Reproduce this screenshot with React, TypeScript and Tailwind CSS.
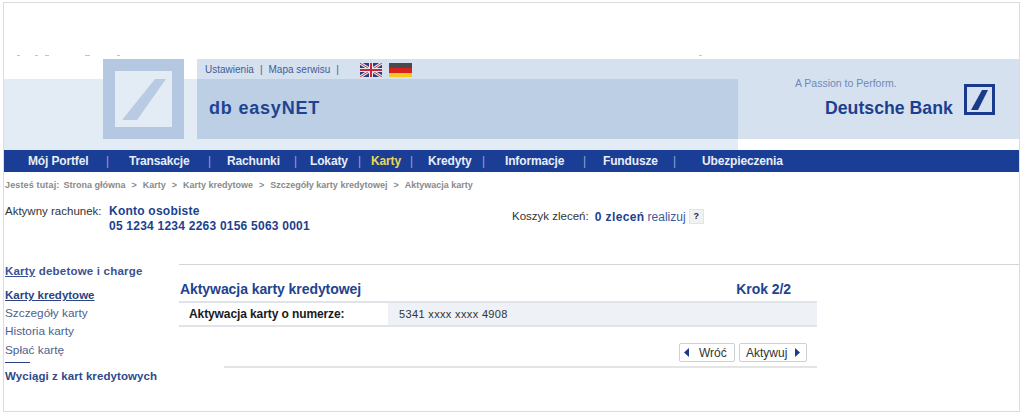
const navItems = [
  { label: "Mój Portfel", cell: "w-[101px] pr-[20px]" },
  { label: "Transakcje", cell: "w-[98px] pr-[16px]" },
  { label: "Rachunki", cell: "w-[83px] pr-[13px]" },
  { label: "Lokaty", cell: "w-[61px] pr-[10px]" },
  { label: "Karty", cell: "w-[57px] pr-[15px]", active: true },
  { label: "Kredyty", cell: "w-[77px] pr-[20px]" },
  { label: "Informacje", cell: "w-[98px] pr-[17px]" },
  { label: "Fundusze", cell: "w-[99px] pr-[26px]" },
  { label: "Ubezpieczenia", cell: "w-[100px]", last: true },
]

const crumbs = ["Strona główna", "Karty", "Karty kredytowe", "Szczegóły karty kredytowej"]

const UkFlag = () => (
  <svg width="22" height="14" viewBox="0 0 22 14">
    <rect width="22" height="14" fill="#2a3f7e" />
    <path d="M0 0L22 14M22 0L0 14" stroke="#e8e8ee" strokeWidth="3" />
    <path d="M0 0L22 14M22 0L0 14" stroke="#c4394a" strokeWidth="1" />
    <path d="M11 0V14M0 7H22" stroke="#e8e8ee" strokeWidth="4" />
    <path d="M11 0V14M0 7H22" stroke="#c4283a" strokeWidth="2" />
  </svg>
)

const DeFlag = () => (
  <div className="w-[23px] h-[14px] flex flex-col">
    <div className="h-[5px] bg-[#4a4a4a]" />
    <div className="h-[5px] bg-[#d8201c]" />
    <div className="h-[4px] bg-[#f6c81e]" />
  </div>
)

const Triangle = ({ dir }: { dir: "left" | "right" }) => (
  <svg width="5" height="9" viewBox="0 0 5 9">
    <path d={dir === "left" ? "M5 0V9L0 4.5Z" : "M0 0V9L5 4.5Z"} fill="#1a3a8a" />
  </svg>
)

const App = () => {
  return (
    <div className="w-[1024px] h-[416px] bg-white font-['Liberation_Sans',Arial,sans-serif] pl-[3px] pt-[2px] overflow-hidden">
      <div className="w-[1017px] h-[410px] border border-[#dcdcdc] flex flex-col">
        {/* clipped remains of the page top */}
        <div className="h-[53px] flex items-end text-[0px]">
          <div className="w-[3px] h-[1px] ml-[13px] bg-[#c4c4c4]" />
          <div className="w-[3px] h-[1px] ml-[15px] bg-[#c4c4c4]" />
          <div className="w-[4px] h-[1px] ml-[7px] bg-[#c4c4c4]" />
          <div className="w-[5px] h-[1px] ml-[36px] bg-[#c4c4c4]" />
          <div className="w-[3px] h-[1px] ml-[27px] bg-[#c4c4c4]" />
          <div className="w-[3px] h-[1px] ml-[579px] bg-[#c8c8c8]" />
        </div>
        <div className="mt-[3px] h-[91px] grid grid-cols-[99px_81px_13px_541px_1fr] grid-rows-[20px_60px_11px]">
          <div className="col-start-1 col-end-5 row-start-2 row-end-4 bg-[#e3ebf5]" />
          <div className="col-start-2 row-start-1 row-end-3 bg-[#b4c8e1] p-[12px] z-10">
            <div className="w-[57px] h-[56px] bg-[#e3ebf5] flex items-center justify-center">
              <svg width="44" height="41" viewBox="0 0 44 41">
                <path d="M33 0H44L15 41H0Z" fill="#b9cbe3" />
              </svg>
            </div>
          </div>
          <div className="col-start-4 col-end-6 row-start-1 row-end-3 bg-[#d6e1ef] z-10" />
          <div className="col-start-4 row-start-2 bg-[#bccfe5] z-10 pl-[12px] pb-[2px] flex items-center text-[#1d4491] text-[18px] leading-none font-bold tracking-[0.8px]">
            db easyNET
          </div>
          <div className="col-start-4 row-start-1 z-20 pl-[8px] flex items-center text-[10px] text-[#3e5c99]">
            <span>Ustawienia</span>
            <span className="ml-[6px]">|</span>
            <span className="ml-[6px]">Mapa serwisu</span>
            <span className="ml-[6px]">|</span>
            <span className="ml-[21px] mt-[2px] flex"><UkFlag /></span>
            <span className="ml-[7px] mt-[2px] flex"><DeFlag /></span>
          </div>
          <div className="col-start-5 row-start-1 row-end-3 z-20 pl-[57px] pt-[18px] flex flex-col">
            <div className="text-[10.5px] leading-[12px] text-[#6f88b8]">A Passion to Perform.</div>
            <div className="flex items-start -mt-[5px] ml-[30px]">
              <div className="mt-[15px] text-[17.7px] leading-[18px] font-bold text-[#1d3f8f] whitespace-nowrap">Deutsche Bank</div>
              <div className="ml-[11px] w-[31px] h-[31px] border-[3px] border-[#1a3a8c] bg-[#d6e1ef] flex items-center justify-center">
                <svg width="17" height="20" viewBox="0 0 17 20">
                  <path d="M11 0H17L7 20H0Z" fill="#1a3a8c" />
                </svg>
              </div>
            </div>
          </div>
        </div>

        <div className="h-[22px] bg-[#1a3e96] flex items-center pl-[24px] text-[12px] font-bold text-[#e8edf6] tracking-[-0.15px]">
          {navItems.map((item) => (
            <div key={item.label} className={`${item.cell} flex justify-between whitespace-nowrap`}>
              <span className={item.active ? "text-[#e8d94e]" : ""}>{item.label}</span>
              {!item.last && <span className="font-normal text-[#8fa6d4]">|</span>}
            </div>
          ))}
        </div>

        <div className="h-[26px] flex items-center pl-[1px] pt-[1px] text-[9px] font-bold text-[#8a8a8a] whitespace-nowrap">
          <span className="tracking-[0.15px]">Jesteś tutaj:</span>
          <span className="ml-[4px]" />
          {crumbs.map((c) => (
            <span key={c} className="mr-[6px]">{c}<span className="ml-[6px]">&gt;</span></span>
          ))}
          <span>Aktywacja karty</span>
        </div>

        <div className="h-[53px] flex text-[12px] pt-[6px]">
          <div className="w-[105px] pl-[1px] text-[11.5px] text-[#333] leading-[14px]">Aktywny rachunek:</div>
          <div className="w-[403px] text-[#1d3f8f] font-bold leading-[15px] tracking-[0.23px]">
            <div>Konto osobiste</div>
            <div>05 1234 1234 2263 0156 5063 0001</div>
          </div>
          <div className="flex items-start text-[11.5px] pt-[4px]">
            <span className="text-[#333]">Koszyk zleceń:</span>
            <span className="ml-[6px] font-bold text-[12px] text-[#1d3f8f] tracking-[0.4px]">0 zleceń</span>
            <span className="ml-[3px] text-[12px] text-[#3a5a9a]">realizuj</span>
            <span className="ml-[3px] mt-[1px] w-[15px] h-[15px] bg-[#f1f1f1] border border-[#e4e4e4] flex items-center justify-center text-[9px] font-bold text-[#222]">?</span>
          </div>
        </div>

        <div className="flex flex-1">
          <div className="w-[175px] pt-[13px] pl-[1px] text-[#2f4a8c] text-[11.5px]">
            <div className="font-bold tracking-[0.2px] leading-[15px] text-[#3a5293]"><span className="underline">Karty</span> debetowe i charge</div>
            <div className="mt-[9px] font-bold underline leading-[15px] text-[#2c4484]">Karty kredytowe</div>
            <div className="mt-[3px] leading-[15px] text-[11.8px] text-[#4d5f8f]">Szczegóły karty</div>
            <div className="mt-[3px] leading-[15px] text-[11.8px] text-[#4d5f8f]">Historia karty</div>
            <div className="mt-[4px] leading-[15px] text-[11.8px] text-[#4d5f8f]">Spłać kartę</div>
            <div className="mt-[4px] w-[25px] h-[1px] bg-[#2c4484]" />
            <div className="mt-[6px] font-bold leading-[15px] tracking-[0.08px] text-[#2f4a8c]">Wyciągi z kart kredytowych</div>
          </div>
          <div className="flex-1 pt-[13px] min-w-0">
            <div className="border-t border-[#d4d4d4]">
              <div className="w-[638px]">
                <div className="h-[36px] flex justify-between items-end pb-[4px] pl-[1px] pr-[26px] text-[14px] leading-[16px] font-bold text-[#1f4391] tracking-[-0.07px]">
                  <span>Aktywacja karty kredytowej</span>
                  <span>Krok 2/2</span>
                </div>
                <div className="h-[26px] flex border-y-2 border-[#e0e3e7] text-[12px] items-center">
                  <div className="w-[209px] pl-[10px] font-bold text-[#1a1a1a] tracking-[-0.1px]">Aktywacja karty o numerze:</div>
                  <div className="flex-1 h-full bg-[#eef1f5] pl-[11px] flex items-center text-[#333] text-[11px] tracking-[0.35px]">5341 xxxx xxxx 4908</div>
                </div>
                <div className="mt-[16px] ml-[45px] pb-[4px] border-b-2 border-[#e4e4e4] flex justify-end pr-[10px] gap-[4px] text-[12px] text-[#333]">
                  <div className="w-[56px] h-[19px] border border-[#d0d0d0] rounded-[2px] flex items-center pl-[4px]">
                    <Triangle dir="left" />
                    <span className="ml-[10px]">Wróć</span>
                  </div>
                  <div className="w-[68px] h-[19px] border border-[#d0d0d0] rounded-[2px] flex items-center justify-between px-[6px]">
                    <span>Aktywuj</span>
                    <Triangle dir="right" />
                  </div>
                </div>
              </div>
            </div>
          </div>
        </div>
      </div>
    </div>
  )
}

export default App
